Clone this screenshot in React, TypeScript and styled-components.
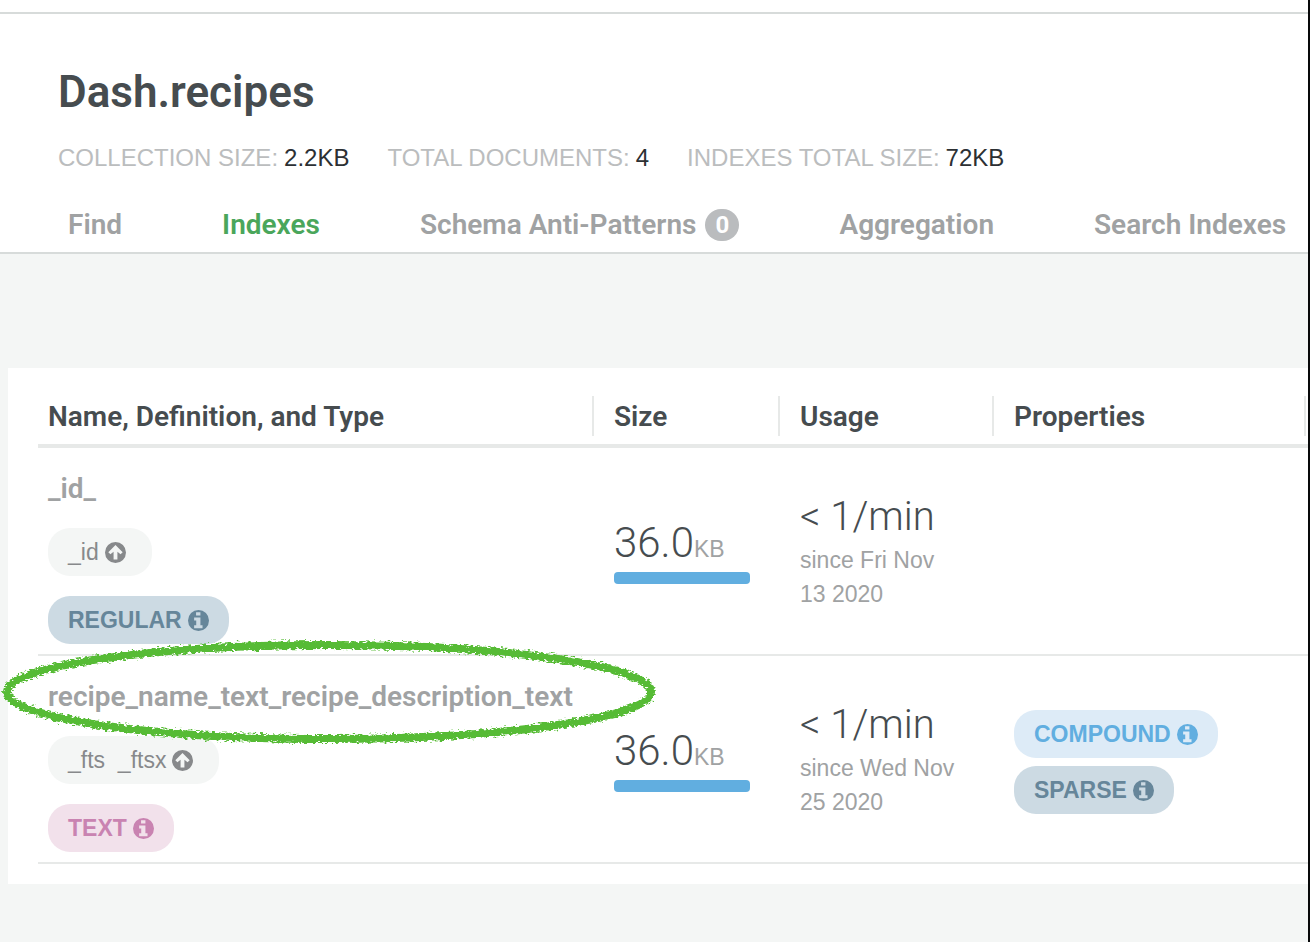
import React from "react";
import styled, { createGlobalStyle, css } from "styled-components";

const displayFont = `Roboto, "Liberation Sans", sans-serif`;

const GlobalStyle = createGlobalStyle`
  * { box-sizing: border-box; }
  body {
    margin: 0;
    background: #f4f6f5;
    font-family: "Liberation Sans", Arial, sans-serif;
    color: #464c4f;
  }
`;

const Page = styled.div`
  min-height: 100vh;
  border-right: 2px solid #08090a;
  overflow: hidden;
`;

const TopRule = styled.div`
  height: 14px;
  background: #fff;
  border-bottom: 2px solid #d7dbda;
`;

const Header = styled.header`
  background: #fff;
  border-bottom: 2px solid #d7dbda;
  padding: 52px 0 0 58px;
`;

const Title = styled.h1`
  margin: 0;
  font-family: ${displayFont};
  font-size: 44px;
  line-height: 52px;
  font-weight: 600;
`;

const Stats = styled.dl`
  display: flex;
  gap: 38px;
  margin: 24px 0 0;
  font-size: 24px;
  line-height: 32px;
  white-space: nowrap;
`;

const Stat = styled.div`
  display: flex;
  gap: 6px;
`;

const StatLabel = styled.dt`
  color: #bbbdbe;
  text-transform: uppercase;
`;

const StatValue = styled.dd`
  margin: 0;
  color: #2c3033;
`;

const Tabs = styled.nav`
  display: flex;
  gap: 100px;
  padding: 34px 0 10px 10px;
  white-space: nowrap;
`;

const Tab = styled.a<{ $active?: boolean }>`
  display: flex;
  align-items: center;
  gap: 9px;
  font-family: ${displayFont};
  font-size: 28px;
  line-height: 34px;
  font-weight: 600;
  text-decoration: none;
  color: ${(p) => (p.$active ? "#4aa65b" : "#a0a2a3")};
`;

const TabBadge = styled.span`
  width: 34px;
  height: 32px;
  border-radius: 16px;
  background: #babcbe;
  color: #fff;
  font-size: 24px;
  font-weight: 700;
  line-height: 32px;
  text-align: center;
`;

const Card = styled.main`
  margin: 114px 0 58px 8px;
  padding: 20px 0 20px 30px;
  background: #fff;
`;

const IndexTable = styled.table`
  width: 100%;
  table-layout: fixed;
  border-collapse: separate;
  border-spacing: 0;
`;

const Col = styled.col<{ $width?: number }>`
  ${(p) => p.$width && css`width: ${p.$width}px;`}
`;

const HeadCell = styled.th`
  padding: 8px 0;
  border-bottom: 4px solid #e7e9e8;
  text-align: left;
  font-family: ${displayFont};
  font-size: 28px;
  line-height: 42px;
  font-weight: 600;
`;

const HeadLabel = styled.div<{ $divided?: boolean }>`
  height: 40px;
  padding-left: ${(p) => (p.$divided ? 20 : 10)}px;
  border-left: ${(p) => (p.$divided ? "2px solid #e7e9e8" : "0")};
  white-space: nowrap;
`;

const Cell = styled.td<{ $first?: boolean }>`
  height: 208px;
  padding: ${(p) => (p.$first ? "20px 0 10px 10px" : "0 30px 0 22px")};
  border-bottom: 2px solid #e7e9e8;
  vertical-align: ${(p) => (p.$first ? "top" : "middle")};
`;

const NameStack = styled.div`
  display: flex;
  flex-direction: column;
  align-items: flex-start;
  gap: 20px;
`;

const IndexName = styled.div`
  position: relative;
  height: 40px;
  font-family: ${displayFont};
  font-size: 28px;
  line-height: 42px;
  font-weight: 600;
  color: #a0a2a3;
  white-space: nowrap;
`;

const tones = {
  field: { bg: "#f4f6f5", fg: "#87898b" },
  slate: { bg: "#ccdae3", fg: "#66869a" },
  pink: { bg: "#f2e1eb", fg: "#c983b1" },
  blue: { bg: "#ddebf7", fg: "#61aee0" },
};

const Pill = styled.span<{ $tone: keyof typeof tones }>`
  display: inline-flex;
  align-items: center;
  gap: 6px;
  height: 48px;
  padding: 0 ${(p) => (p.$tone === "field" ? 26 : 20)}px 0 20px;
  border-radius: 22px;
  background: ${(p) => tones[p.$tone].bg};
  color: ${(p) => tones[p.$tone].fg};
  font-size: 23px;
  line-height: 48px;
  font-weight: ${(p) => (p.$tone === "field" ? 400 : 700)};
  white-space: pre;
`;

const Glyph = styled.svg`
  width: 21px;
  height: 21px;
`;

const SizeValue = styled.div`
  display: flex;
  align-items: baseline;
  height: 54px;
  font-family: ${displayFont};
  font-weight: 300;
  font-size: 42px;
  line-height: 50px;
  white-space: nowrap;
`;

const Unit = styled.span`
  font-family: "Liberation Sans", Arial, sans-serif;
  font-weight: 400;
  font-size: 23px;
  color: #a0a2a3;
`;

const SizeBar = styled.div`
  width: 136px;
  height: 12px;
  border-radius: 4px;
  background: #61aee0;
`;

const UsageRate = styled.div`
  font-family: ${displayFont};
  font-weight: 300;
  font-size: 40px;
  line-height: 52px;
  white-space: nowrap;
`;

const UsageSince = styled.div`
  font-size: 23px;
  line-height: 34px;
  color: #a0a2a3;
`;

const PropertyStack = styled.div`
  display: flex;
  flex-direction: column;
  align-items: flex-start;
  gap: 8px;
  padding-top: 6px;
`;

const Circled = styled.svg`
  position: absolute;
  left: -48px;
  top: -42px;
  width: 664px;
  height: 114px;
  pointer-events: none;
`;

function HandDrawnCircle() {
  return (
    <Circled viewBox="0 0 664 114" aria-hidden="true">
      <defs>
        <filter id="crayon" x="0" y="0" width="664" height="114" filterUnits="userSpaceOnUse">
          <feTurbulence type="fractalNoise" baseFrequency="0.25 0.6" numOctaves="3" seed="4" result="noise" />
          <feDisplacementMap in="SourceGraphic" in2="noise" scale="7" xChannelSelector="R" yChannelSelector="G" />
        </filter>
      </defs>
      <ellipse cx="329" cy="58" rx="322" ry="47" fill="none" stroke="#57bb35" strokeWidth="8" filter="url(#crayon)" />
    </Circled>
  );
}

function InfoIcon() {
  return (
    <Glyph viewBox="0 0 24 24" aria-hidden="true">
      <path
        fill="currentColor"
        fillRule="evenodd"
        d="M12 0a12 12 0 1 1 0 24a12 12 0 1 1 0-24ZM9.2 2.6h5v3.8h-5ZM7 8.6h7.2v8.8h2.4v3.4H7v-3.4h2.4v-5.4H7Z"
      />
    </Glyph>
  );
}

function ArrowUpIcon() {
  return (
    <Glyph viewBox="0 0 24 24" aria-hidden="true">
      <path
        fill="currentColor"
        fillRule="evenodd"
        d="M12 0a12 12 0 1 1 0 24a12 12 0 1 1 0-24ZM12 3.4L3.8 11.6L6.2 14L9.8 11.2V20H14.2V11.2L17.8 14L20.2 11.6Z"
      />
    </Glyph>
  );
}

type PillData = { label: string; tone: keyof typeof tones };
type IndexRow = {
  name: string;
  circled?: boolean;
  fields: string;
  type: PillData;
  size: string;
  unit: string;
  rate: string;
  since: string;
  properties: PillData[];
};

const rows: IndexRow[] = [
  {
    name: "_id_",
    fields: "_id",
    type: { label: "REGULAR", tone: "slate" },
    size: "36.0",
    unit: "KB",
    rate: "< 1/min",
    since: "since Fri Nov 13 2020",
    properties: [],
  },
  {
    name: "recipe_name_text_recipe_description_text",
    circled: true,
    fields: "_fts  _ftsx",
    type: { label: "TEXT", tone: "pink" },
    size: "36.0",
    unit: "KB",
    rate: "< 1/min",
    since: "since Wed Nov 25 2020",
    properties: [
      { label: "COMPOUND", tone: "blue" },
      { label: "SPARSE", tone: "slate" },
    ],
  },
];

const stats = [
  ["Collection size:", "2.2KB"],
  ["Total documents:", "4"],
  ["Indexes total size:", "72KB"],
];

const tabs: { label: string; active?: boolean; badge?: string }[] = [
  { label: "Find" },
  { label: "Indexes", active: true },
  { label: "Schema Anti-Patterns", badge: "0" },
  { label: "Aggregation" },
  { label: "Search Indexes" },
];

const InfoPill = ({ label, tone }: PillData) => (
  <Pill $tone={tone}>
    {label}
    <InfoIcon />
  </Pill>
);

export default function App() {
  return (
    <>
      <GlobalStyle />
      <Page>
        <TopRule />
        <Header>
          <Title>Dash.recipes</Title>
          <Stats>
            {stats.map(([label, value]) => (
              <Stat key={label}>
                <StatLabel>{label}</StatLabel>
                <StatValue>{value}</StatValue>
              </Stat>
            ))}
          </Stats>
          <Tabs>
            {tabs.map((t) => (
              <Tab key={t.label} href="#" $active={t.active} aria-current={t.active ? "page" : undefined}>
                {t.label}
                {t.badge && <TabBadge>{t.badge}</TabBadge>}
              </Tab>
            ))}
          </Tabs>
        </Header>
        <Card>
          <IndexTable>
            <colgroup>
              <Col />
              <Col $width={186} />
              <Col $width={214} />
              <Col $width={312} />
              <Col $width={4} />
            </colgroup>
            <thead>
              <tr>
                <HeadCell><HeadLabel>Name, Definition, and Type</HeadLabel></HeadCell>
                <HeadCell><HeadLabel $divided>Size</HeadLabel></HeadCell>
                <HeadCell><HeadLabel $divided>Usage</HeadLabel></HeadCell>
                <HeadCell><HeadLabel $divided>Properties</HeadLabel></HeadCell>
                <HeadCell as="td"><HeadLabel $divided /></HeadCell>
              </tr>
            </thead>
            <tbody>
              {rows.map((r) => (
                <tr key={r.name}>
                  <Cell $first>
                    <NameStack>
                      <IndexName>
                        {r.name}
                        {r.circled && <HandDrawnCircle />}
                      </IndexName>
                      <Pill $tone="field">
                        {r.fields}
                        <ArrowUpIcon />
                      </Pill>
                      <InfoPill {...r.type} />
                    </NameStack>
                  </Cell>
                  <Cell>
                    <SizeValue>{r.size}<Unit>{r.unit}</Unit></SizeValue>
                    <SizeBar />
                  </Cell>
                  <Cell>
                    <UsageRate>{r.rate}</UsageRate>
                    <UsageSince>{r.since}</UsageSince>
                  </Cell>
                  <Cell colSpan={2}>
                    <PropertyStack>
                      {r.properties.map((p) => <InfoPill key={p.label} {...p} />)}
                    </PropertyStack>
                  </Cell>
                </tr>
              ))}
            </tbody>
          </IndexTable>
        </Card>
      </Page>
    </>
  );
}
